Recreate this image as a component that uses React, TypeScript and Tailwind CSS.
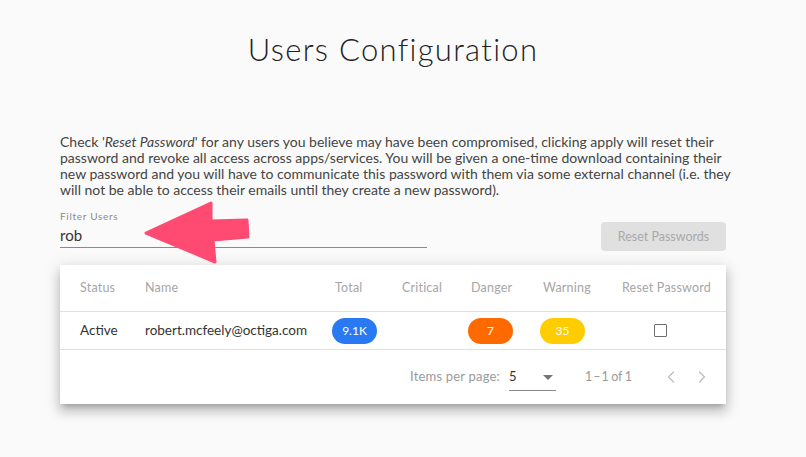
import { ChevronLeft, ChevronRight } from "lucide-react";

const columns = [
  "Status",
  "Name",
  "Total",
  "Critical",
  "Danger",
  "Warning",
  "Reset Password",
];

function Badge({ value, color }: { value: string; color: string }) {
  return (
    <span
      className={`-ml-[3px] inline-flex h-[26px] w-[45px] items-center justify-center rounded-full text-[12px] text-white ${color}`}
    >
      {value}
    </span>
  );
}

export default function App() {
  return (
    <div
      className="relative min-h-screen bg-[#fafafa] text-[#333]"
      style={{ fontFamily: "Lato, 'Open Sans', sans-serif" }}
    >
      <div className="ml-[60px] w-[666px] pt-[30px]">
        <h1 className="text-center text-[31px] font-light leading-[38px] tracking-[1.3px] text-[#222]">
          Users Configuration
        </h1>

        {/* Description */}
        <p className="mt-[66px] whitespace-nowrap text-[14px] leading-[16px] text-[#444]">
          Check '<i>Reset Password</i>' for any users you believe may have been compromised, clicking apply will reset their
          <br />
          password and revoke all access across apps/services. You will be given a one-time download containing their
          <br />
          new password and you will have to communicate this password with them via some external channel (i.e. they
          <br />
          will not be able to access their emails until they create a new password).
        </p>

        {/* Filter + action */}
        <div className="mt-[12px] flex items-end justify-between">
          <div className="w-[367px] border-b border-[#8a8a8a] pb-[3px]">
            <div className="text-[10px] leading-[12px] tracking-[0.7px] text-[#8c8c8c]">
              Filter Users
            </div>
            <div className="mt-[4px] text-[15px] leading-[18px] text-[#333]">
              rob
            </div>
          </div>
          <button
            disabled
            className="mb-[-3px] h-[29px] w-[125px] rounded-[4px] bg-[#e0e0e0] pt-[2px] text-[12.5px] text-[#a9a9a9]"
          >
            Reset Passwords
          </button>
        </div>

        {/* Table card */}
        <div className="mt-[17px] bg-white shadow-[0_5px_5px_-3px_rgba(0,0,0,0.2),0_8px_10px_1px_rgba(0,0,0,0.14),0_3px_14px_2px_rgba(0,0,0,0.12)]">
          <div className="grid h-[47px] grid-cols-[65px_190px_67px_69px_72px_79px_1fr] items-center border-b border-[#e0e0e0] pl-[20px] text-[12.5px] tracking-[0.2px] text-[#a6a6a6]">
            {columns.map((c) => (
              <div key={c}>{c}</div>
            ))}
          </div>
          <div className="grid h-[38px] grid-cols-[65px_190px_67px_69px_72px_79px_1fr] items-center border-b border-[#e0e0e0] pl-[20px] text-[13.5px] text-[#333]">
            <div>Active</div>
            <div>robert.mcfeely@octiga.com</div>
            <div>
              <Badge value="9.1K" color="bg-[#2979f2]" />
            </div>
            <div />
            <div>
              <Badge value="7" color="bg-[#ff6a00]" />
            </div>
            <div>
              <Badge value="35" color="bg-[#ffcc00]" />
            </div>
            <div>
              <span className="ml-[32px] block h-[13px] w-[13px] rounded-[1px] border-[1.5px] border-[#6e6e6e]" />
            </div>
          </div>

          {/* Paginator */}
          <div className="flex h-[54px] items-center pl-[350px] text-[13px] text-[#9a9a9a]">
            <span className="tracking-[0.2px]">Items per page:</span>
            <div className="ml-[9px] flex w-[47px] items-center justify-between border-b border-[#8a8a8a] pb-[3px] pt-[4px]">
              <span className="text-[#333]">5</span>
              <span className="mr-[3px] h-0 w-0 border-x-[5px] border-t-[5px] border-x-transparent border-t-[#757575]" />
            </div>
            <span className="ml-[29px] text-[12.5px] tracking-[-0.3px]">1&thinsp;–&thinsp;1 of 1</span>
            <ChevronLeft className="ml-[29px] h-[20px] w-[20px] text-[#bdbdbd]" strokeWidth={1.5} />
            <ChevronRight className="ml-[11px] h-[20px] w-[20px] text-[#bdbdbd]" strokeWidth={1.5} />
          </div>
        </div>
      </div>

      {/* Annotation arrow */}
      <svg
        className="pointer-events-none absolute left-0 top-0"
        width="806"
        height="457"
        viewBox="0 0 806 457"
      >
        <polygon
          points="146,233 211,203 211,221 247,220 248,237 213,240 215,262"
          fill="#ff4a72"
          stroke="#ff4a72"
          strokeWidth="3"
          strokeLinejoin="round"
        />
      </svg>
    </div>
  );
}
